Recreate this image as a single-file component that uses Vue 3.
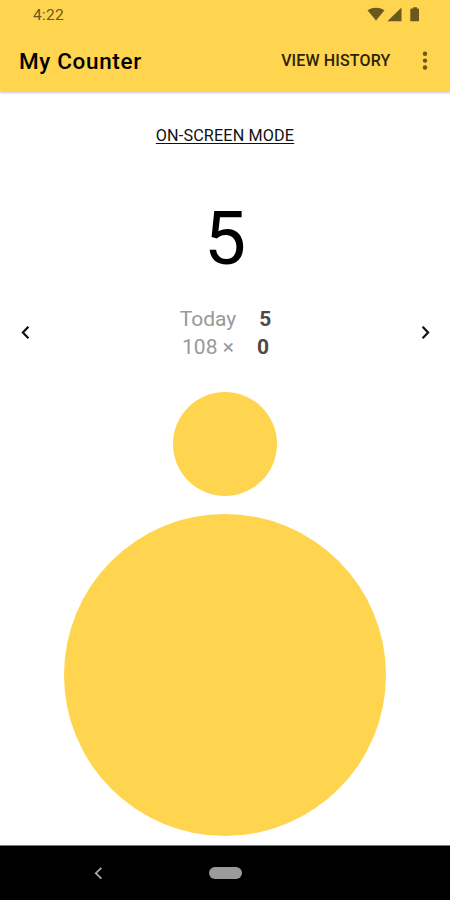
<script setup>
import { ref } from 'vue'

const title = ref('My Counter')
const count = ref(5)
const stats = ref([
  { label: 'Today', value: 5 },
  { label: '108 ×', value: 0 },
])
</script>

<template>
  <div class="screen">
    <header class="header">
      <div class="status">
        <span class="clock">4:22</span>
        <svg class="status-icons" width="54" height="16" viewBox="0 0 54 16" fill="#6a581d">
          <path d="M0.5 3.2Q9 -1.7 17.5 3.2L9 13.6Z" />
          <path d="M34.5 0.6V14.3H20.4Z" />
          <path d="M45 1.6H46.2V0.2H50V1.6H51.2Q52 1.6 52 2.5V13.4Q52 14.3 51.2 14.3H44.2Q43.3 14.3 43.3 13.4V2.5Q43.3 1.6 44.2 1.6Z" />
        </svg>
      </div>
      <div class="toolbar">
        <h1 class="title">{{ title }}</h1>
        <button class="history">VIEW HISTORY</button>
        <button class="more" aria-label="More options">
          <svg width="6" height="20" viewBox="0 0 6 20" fill="#6a581d">
            <circle cx="3" cy="2.7" r="2.2" />
            <circle cx="3" cy="9.6" r="2.2" />
            <circle cx="3" cy="16.5" r="2.2" />
          </svg>
        </button>
      </div>
    </header>

    <main class="content">
      <button class="mode">ON-SCREEN MODE</button>
      <div class="count">{{ count }}</div>
      <div class="pager">
        <button class="arrow" aria-label="Previous">
          <svg width="10" height="14" viewBox="0 0 10 14"><path d="M8.4 0.7L2.9 6.5L8.4 12.3" /></svg>
        </button>
        <dl class="stats">
          <div v-for="s in stats" :key="s.label" class="stat">
            <dt>{{ s.label }}</dt>
            <dd>{{ s.value }}</dd>
          </div>
        </dl>
        <button class="arrow" aria-label="Next">
          <svg width="10" height="14" viewBox="0 0 10 14"><path d="M2.6 0.7L8.1 6.5L2.6 12.3" /></svg>
        </button>
      </div>
      <button class="round small" aria-label="Subtract"></button>
      <button class="round large" aria-label="Add" @click="count++"></button>
    </main>

    <nav class="navbar">
      <svg class="back" width="10" height="14" viewBox="0 0 10 14"><path d="M8.4 1.8L2.8 7.2L8.4 12.6" /></svg>
      <span class="home"></span>
    </nav>
  </div>
</template>

<style>
body {
  margin: 0;
  background: #fff;
}
</style>

<style scoped>
.screen {
  width: 450px;
  height: 900px;
  display: flex;
  flex-direction: column;
  overflow: hidden;
  background: #fff;
  font-family: Roboto, sans-serif;
  color: #000;
}
button {
  padding: 0;
  border: 0;
  background: none;
  font: inherit;
  color: inherit;
}
.header {
  height: 92px;
  flex: none;
  background: #ffd54f;
  box-shadow: 0 1px 2px rgba(0, 0, 0, 0.22);
}
.status {
  height: 29px;
  box-sizing: border-box;
  padding: 7px 29px 0 33px;
  display: flex;
  justify-content: space-between;
}
.clock {
  font-size: 15.5px;
  line-height: 16px;
  color: #6a581d;
  letter-spacing: 0.3px;
}
.toolbar {
  height: 63px;
  padding: 0 22px 0 19px;
  display: flex;
  align-items: center;
}
.title {
  margin: 0 auto 0 0;
  font-size: 22.5px;
  font-weight: 500;
  line-height: 28px;
  letter-spacing: 0.65px;
}
.history {
  font-size: 16px;
  font-weight: 500;
  line-height: 20px;
  letter-spacing: 0.15px;
  margin: 1px 31.5px 0 0;
  color: #2b2409;
}
.more {
  display: flex;
}
.content {
  flex: 1;
  display: flex;
  flex-direction: column;
  align-items: center;
}
.mode {
  margin-top: 33px;
  height: 21px;
  font-size: 16.2px;
  line-height: 20px;
  letter-spacing: 0.15px;
  color: #111;
  text-decoration: underline;
  text-decoration-thickness: 1px;
  text-underline-offset: 2px;
}
.count {
  margin-top: 48px;
  height: 88px;
  font-size: 75px;
  line-height: 88px;
}
.pager {
  align-self: stretch;
  margin-top: 23px;
  height: 56px;
  padding: 0 20px;
  display: flex;
  align-items: center;
  justify-content: space-between;
}
.arrow {
  display: flex;
}
.arrow path {
  fill: none;
  stroke: #111;
  stroke-width: 2.2;
}
.stats {
  margin: 0;
  padding-left: 1px;
}
.stat {
  height: 28px;
  display: flex;
  justify-content: center;
  gap: 23px;
  font-size: 21px;
  line-height: 28px;
}
.stat dt {
  color: #999;
}
.stat dd {
  margin: 0;
  font-weight: 700;
  color: #4a4a4a;
}
.round {
  flex: none;
  border-radius: 50%;
  background: #ffd54f;
}
.small {
  width: 104px;
  height: 104px;
  margin-top: 31px;
}
.large {
  width: 322px;
  height: 322px;
  margin-top: 18px;
}
.navbar {
  height: 54px;
  flex: none;
  border-top: 1px solid #777;
  box-sizing: content-box;
  background: #000;
  display: flex;
  align-items: center;
}
.back {
  margin-left: 93px;
}
.back path {
  fill: none;
  stroke: #aaa;
  stroke-width: 1.8;
}
.home {
  width: 33px;
  height: 12px;
  margin-left: 106px;
  border-radius: 6px;
  background: #9b9b9b;
}
</style>
